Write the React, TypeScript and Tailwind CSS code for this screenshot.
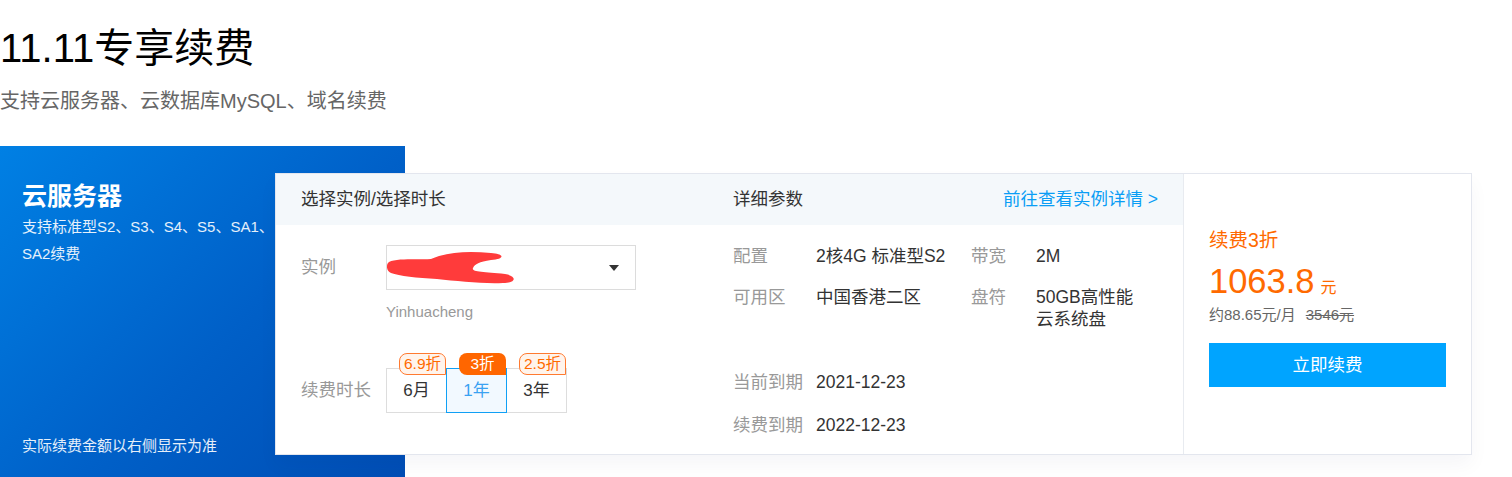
import React from "react";

const font = "font-['Liberation_Sans','Noto_Sans_CJK_SC',sans-serif]";

function Scribble() {
    return (
        <svg width="132" height="40" viewBox="0 0 132 40" className="absolute left-0 top-[4px]">
            <path
                d="M2 12 C 10 8, 30 10, 44 9 C 60 2, 80 1, 104 3 C 118 4, 118 9, 104 10 C 92 12, 88 14, 86 18 C 84 22, 96 22, 118 24 C 130 26, 130 33, 116 33 C 96 34, 70 31, 50 29 C 30 28, 12 26, 4 23 C -1 21, -1 14, 2 12 Z"
                fill="#ff3b3b"/>
        </svg>
    );
}

function Badge({text, solid}: { text: string; solid?: boolean }) {
    return (
        <div
            className={`absolute right-0 top-[-16px] w-[47px] h-[22px] flex items-center justify-center text-[15.5px] leading-none rounded-tl-[8px] rounded-bl-[8px] rounded-tr-[7px] ${solid ? "bg-[#ff6600] text-white" : "bg-[#fff4ec] text-[#ff6a00] border border-[#ff7a30]"}`}>
            {text}
        </div>
    );
}

function Tab({label, badge, active, solid}: { label: string; badge: string; active?: boolean; solid?: boolean }) {
    return (
        <div
            className={`relative w-[61px] h-[45px] flex items-center justify-center text-[17px] ${active ? "border border-[#10a0f5] bg-[#f2f9ff] text-[#3aa2f2] z-10" : "border border-[#dddddd] text-[#333]"} -ml-px first:ml-0`}>
            {label}
            <Badge text={badge} solid={solid}/>
        </div>
    );
}

export default function App() {
    return (
        <div className={`w-[1512px] h-[477px] overflow-hidden bg-white ${font}`}>
            <h1 className="text-[40px] leading-[46px] text-black pt-[25px]">11.11专享续费</h1>
            <p className="text-[20px] leading-[26px] text-[#666] mt-[17px]">支持云服务器、云数据库MySQL、域名续费</p>

            <div className="flex mt-[32px]">
                {/* blue side panel */}
                <div
                    className="w-[405px] h-[340px] shrink-0 bg-[linear-gradient(135deg,#0080e4_0%,#0060c8_55%,#004db4_100%)] pl-[22px] pt-[34px] flex flex-col">
                    <div className="text-[25px] font-bold text-white leading-[32px]">云服务器</div>
                    <div className="w-[258px] text-[15px] leading-[27px] text-white/90 mt-[1px]">
                        支持标准型S2、S3、S4、S5、SA1、SA2续费
                    </div>
                    <div className="text-[15px] text-white/90 mt-[169px] leading-[20px]">实际续费金额以右侧显示为准</div>
                </div>

                {/* card */}
                <div
                    className="-ml-[130px] mt-[27px] w-[1197px] h-[282px] bg-white border border-[#e3e6ee] flex shadow-[0_10px_18px_rgba(20,30,80,0.04)] relative text-[17.5px]">
                    {/* left */}
                    <div className="w-[431px] flex flex-col">
                        <div className="h-[51px] bg-[#f4f8fb] flex items-center pl-[25px] text-[#333]">
                            选择实例/选择时长
                        </div>
                        <div className="pl-[25px] pt-[20px]">
                            <div className="flex items-center">
                                <div className="w-[85px] text-[#999]">实例</div>
                                <div className="relative w-[250px] h-[45px] border border-[#dcdcdc]">
                                    <Scribble/>
                                    <svg width="10" height="6" viewBox="0 0 10 6"
                                         className="absolute right-[16px] top-[19px]">
                                        <path d="M0 0 L10 0 L5 6 Z" fill="#333"/>
                                    </svg>
                                </div>
                            </div>
                            <div className="ml-[85px] mt-[12px] text-[15px] text-[#999] leading-[20px]">Yinhuacheng</div>
                            <div className="flex items-center mt-[46px]">
                                <div className="w-[85px] text-[#999]">续费时长</div>
                                <div className="flex">
                                    <Tab label="6月" badge="6.9折"/>
                                    <Tab label="1年" badge="3折" active solid/>
                                    <Tab label="3年" badge="2.5折"/>
                                </div>
                            </div>
                        </div>
                    </div>

                    {/* middle */}
                    <div className="w-[476px] flex flex-col">
                        <div
                            className="h-[51px] bg-[#f4f8fb] flex items-center justify-between pl-[26px] pr-[25px]">
                            <span className="text-[#333]">详细参数</span>
                            <span className="text-[#0a9df5]">前往查看实例详情 &gt;</span>
                        </div>
                        <div className="pl-[26px] pt-[20px] leading-[22px]">
                            <div className="flex">
                                <div className="w-[83px] text-[#999]">配置</div>
                                <div className="w-[155px] text-[#333]">2核4G 标准型S2</div>
                                <div className="w-[65px] text-[#999]">带宽</div>
                                <div className="text-[#333]">2M</div>
                            </div>
                            <div className="flex mt-[19px]">
                                <div className="w-[83px] text-[#999]">可用区</div>
                                <div className="w-[155px] text-[#333]">中国香港二区</div>
                                <div className="w-[65px] text-[#999]">盘符</div>
                                <div className="text-[#333] w-[110px]">50GB高性能<br/>云系统盘</div>
                            </div>
                            <div className="flex mt-[41px]">
                                <div className="w-[83px] text-[#999]">当前到期</div>
                                <div className="text-[#333]">2021-12-23</div>
                            </div>
                            <div className="flex mt-[21px]">
                                <div className="w-[83px] text-[#999]">续费到期</div>
                                <div className="text-[#333]">2022-12-23</div>
                            </div>
                        </div>
                    </div>

                    {/* right */}
                    <div className="flex-1 border-l border-[#e8ebf0] pl-[25px] pr-[25px] pt-[54px]">
                        <div className="text-[19.5px] text-[#ff6a00] leading-[24px]">续费3折</div>
                        <div className="flex items-baseline mt-[9px] leading-[40px]">
                            <span className="text-[34.5px] text-[#ff6a00]">1063.8</span>
                            <span className="text-[16px] text-[#ff6a00] ml-[6px]">元</span>
                        </div>
                        <div className="text-[15px] text-[#666] leading-[20px] -mt-[3px]">
                            约88.65元/月<span className="line-through ml-[10px]">3546元</span>
                        </div>
                        <button
                            className="mt-[18px] w-full h-[44px] bg-[#00a4ff] text-white text-[17.5px] flex items-center justify-center">
                            立即续费
                        </button>
                    </div>
                </div>
            </div>
        </div>
    );
}
